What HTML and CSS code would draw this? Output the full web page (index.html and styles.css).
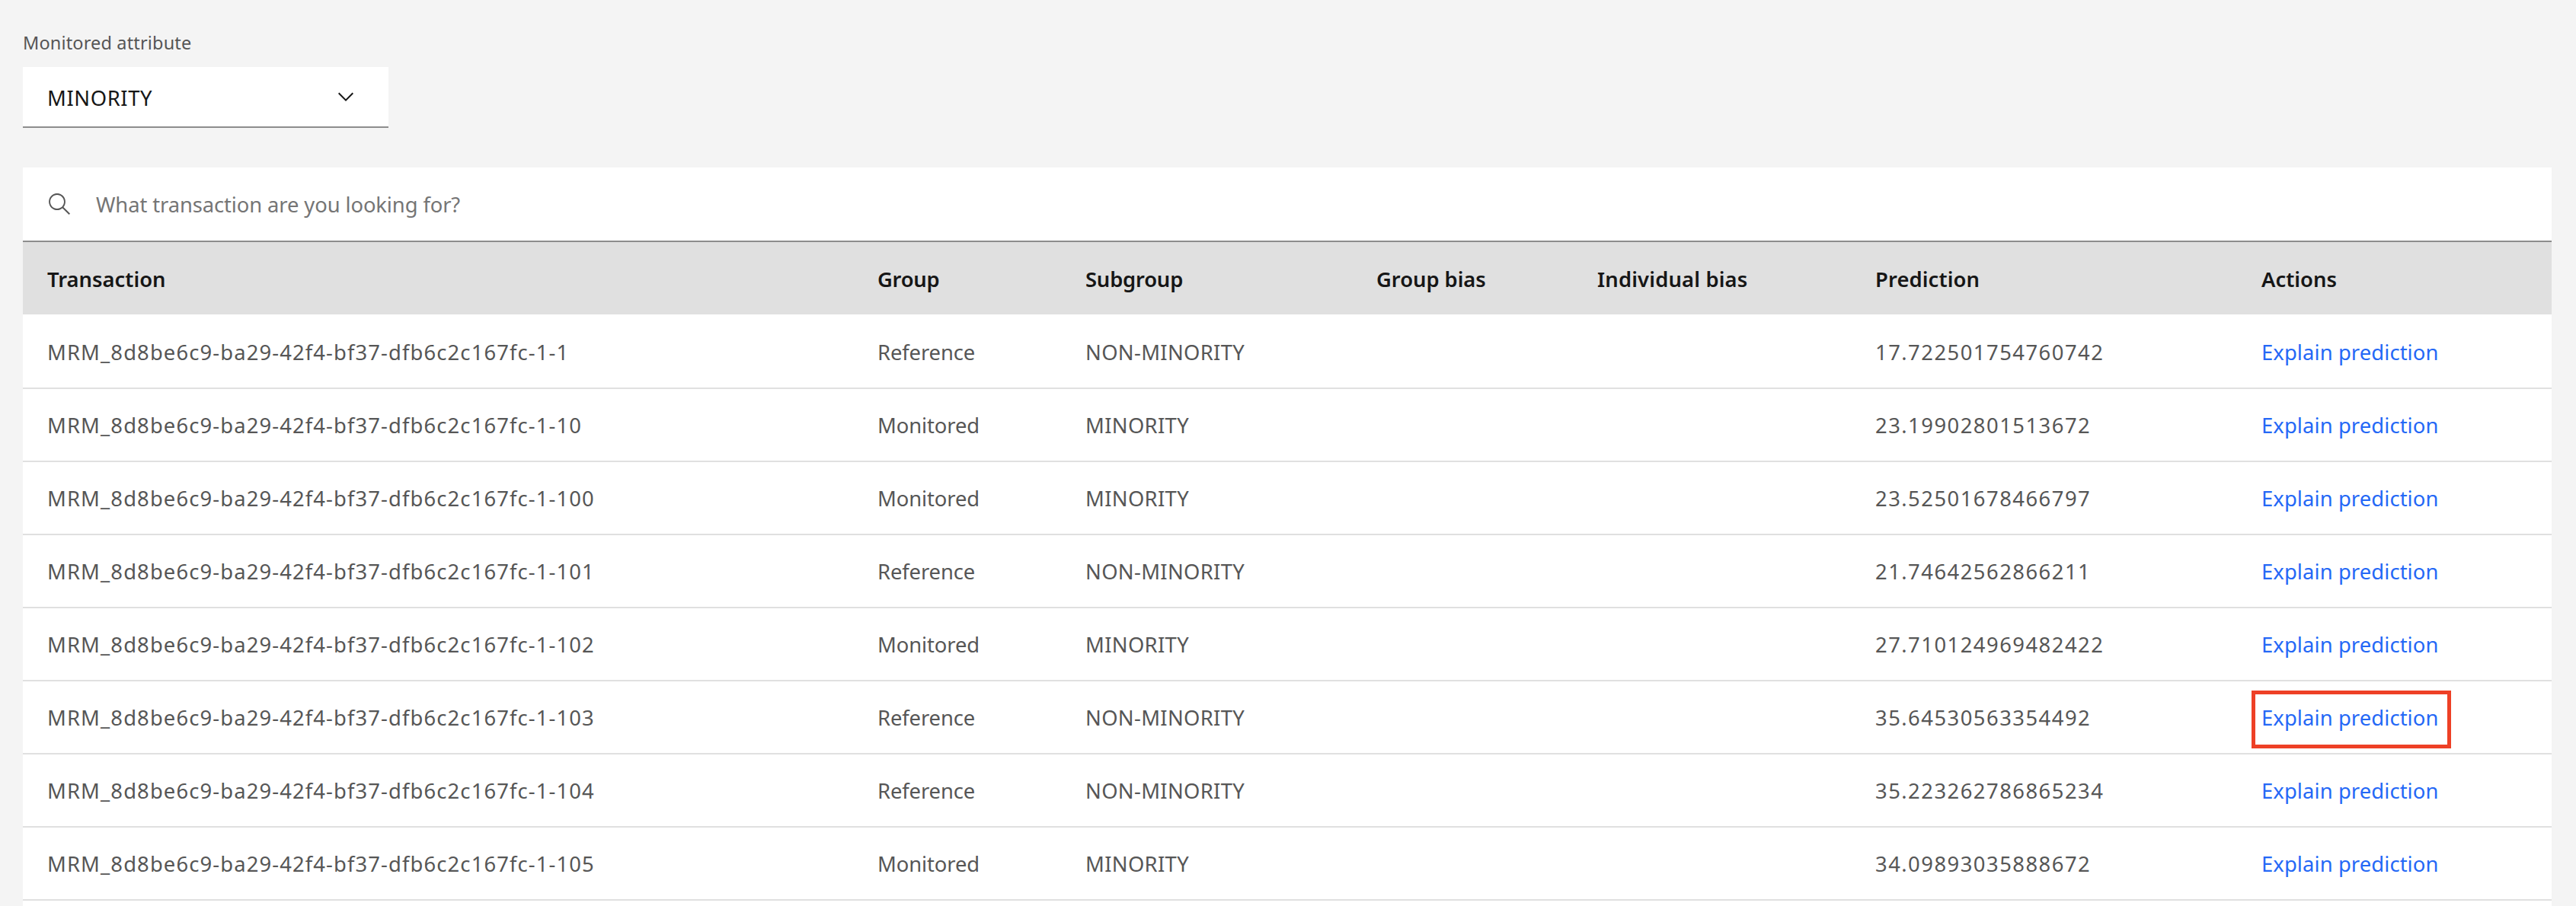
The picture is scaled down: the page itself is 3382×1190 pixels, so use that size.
FILE: index.html
```html
<!DOCTYPE html>
<html lang="en">
<head>
<meta charset="utf-8">
<title>Transactions</title>
<link rel="stylesheet" href="styles.css">
</head>
<body>
<main class="page">
  <section class="filter">
    <div class="filter-label">Monitored attribute</div>
    <div class="select">
      <span class="select-value">MINORITY</span>
      <svg class="icon" viewBox="0 0 16 16" fill="currentColor"><path d="M8 11L3 6l.7-.7L8 9.6l4.3-4.3.7.7z"/></svg>
    </div>
  </section>
  <section class="panel">
    <div class="search">
      <svg class="icon" viewBox="0 0 16 16" fill="currentColor"><path d="M15 14.3L10.7 10c1.9-2.3 1.6-5.8-.7-7.7S4.2.7 2.3 3 .7 8.8 3 10.7c2 1.7 5 1.7 7 0l4.3 4.3.7-.7zM2 6.5C2 4 4 2 6.5 2S11 4 11 6.5 9 11 6.5 11 2 9 2 6.5z"/></svg>
      <span class="search-placeholder">What transaction are you looking for?</span>
    </div>
    <table class="table">
      <colgroup>
        <col class="w-transaction"><col class="w-group"><col class="w-subgroup"><col class="w-group-bias"><col class="w-individual-bias"><col class="w-prediction"><col class="w-actions">
      </colgroup>
      <thead>
        <tr><th class="h-transaction">Transaction</th><th class="h-group">Group</th><th class="h-subgroup">Subgroup</th><th class="h-group-bias">Group bias</th><th class="h-individual-bias">Individual bias</th><th class="h-prediction">Prediction</th><th class="h-actions">Actions</th></tr>
      </thead>
      <tbody>
        <tr><td class="id">MRM_8d8be6c9-ba29-42f4-bf37-dfb6c2c167fc-1-1</td><td class="group">Reference</td><td class="subgroup">NON-MINORITY</td><td></td><td></td><td class="number">17.722501754760742</td><td><a class="link">Explain prediction</a></td></tr>
        <tr><td class="id">MRM_8d8be6c9-ba29-42f4-bf37-dfb6c2c167fc-1-10</td><td class="group">Monitored</td><td class="subgroup">MINORITY</td><td></td><td></td><td class="number">23.19902801513672</td><td><a class="link">Explain prediction</a></td></tr>
        <tr><td class="id">MRM_8d8be6c9-ba29-42f4-bf37-dfb6c2c167fc-1-100</td><td class="group">Monitored</td><td class="subgroup">MINORITY</td><td></td><td></td><td class="number">23.52501678466797</td><td><a class="link">Explain prediction</a></td></tr>
        <tr><td class="id">MRM_8d8be6c9-ba29-42f4-bf37-dfb6c2c167fc-1-101</td><td class="group">Reference</td><td class="subgroup">NON-MINORITY</td><td></td><td></td><td class="number">21.74642562866211</td><td><a class="link">Explain prediction</a></td></tr>
        <tr><td class="id">MRM_8d8be6c9-ba29-42f4-bf37-dfb6c2c167fc-1-102</td><td class="group">Monitored</td><td class="subgroup">MINORITY</td><td></td><td></td><td class="number">27.710124969482422</td><td><a class="link">Explain prediction</a></td></tr>
        <tr><td class="id">MRM_8d8be6c9-ba29-42f4-bf37-dfb6c2c167fc-1-103</td><td class="group">Reference</td><td class="subgroup">NON-MINORITY</td><td></td><td></td><td class="number">35.64530563354492</td><td><a class="link highlighted">Explain prediction</a></td></tr>
        <tr><td class="id">MRM_8d8be6c9-ba29-42f4-bf37-dfb6c2c167fc-1-104</td><td class="group">Reference</td><td class="subgroup">NON-MINORITY</td><td></td><td></td><td class="number">35.223262786865234</td><td><a class="link">Explain prediction</a></td></tr>
        <tr><td class="id">MRM_8d8be6c9-ba29-42f4-bf37-dfb6c2c167fc-1-105</td><td class="group">Monitored</td><td class="subgroup">MINORITY</td><td></td><td></td><td class="number">34.09893035888672</td><td><a class="link">Explain prediction</a></td></tr>
      </tbody>
    </table>
  </section>
</main>
</body>
</html>
```
FILE: styles.css
```css
*, *::after { box-sizing: border-box; }

body {
  margin: 0;
  background: #f4f4f4;
  color: #565656;
  font-family: "Noto Sans", "Open Sans", sans-serif;
  font-size: 27.4px;
  line-height: 36px;
}

.page {
  height: 1190px;
  padding: 40px 32px 0 30px;
  display: flex;
  flex-direction: column;
  overflow: hidden;
}

.icon { width: 32px; height: 32px; flex: none; }

/* Attribute filter */
.filter { width: 480px; margin-bottom: 52px; }

.filter-label {
  height: 48px;
  line-height: 32px;
  font-size: 23.5px;
  letter-spacing: .15px;
}

.select {
  height: 80px;
  padding: 0 40px 0 32px;
  display: flex;
  align-items: center;
  justify-content: space-between;
  background: #fff;
  border-bottom: 2px solid #8d8d8d;
  color: #161616;
}

.select-value { padding-top: 4px; letter-spacing: .6px; }

/* Search and table */
.panel { flex: 1; background: #fff; }

.search {
  height: 98px;
  padding-left: 32px;
  display: flex;
  align-items: center;
  gap: 32px;
  border-bottom: 2px solid #8d8d8d;
  color: #565656;
}

.search-placeholder { padding-top: 2px; color: #757575; letter-spacing: -.11px; }

.table {
  width: 3320px;
  table-layout: fixed;
  border-collapse: separate;
  border-spacing: 0;
}

.w-transaction { width: 1090px; }
.w-group { width: 273px; }
.w-subgroup { width: 382px; }
.w-group-bias { width: 290px; }
.w-individual-bias { width: 365px; }
.w-prediction { width: 507px; }
.w-actions { width: 413px; }

.table th, .table td {
  padding: 2px 0 0 32px;
  text-align: left;
  vertical-align: middle;
  white-space: nowrap;
}

.table th {
  height: 97px;
  background: #e0e0e0;
  border-bottom: 2px solid #fff;
  color: #161616;
  font-weight: 600;
}

.table td { height: 96px; border-bottom: 2px solid #e0e0e0; }

.h-transaction { letter-spacing: 0; }
.h-group { letter-spacing: -.3px; }
.h-subgroup { letter-spacing: -.2px; }
.h-group-bias { letter-spacing: -.05px; }
.h-individual-bias { letter-spacing: .15px; }
.h-prediction { letter-spacing: .1px; }
.h-actions { letter-spacing: 0; }

.id { letter-spacing: 1.12px; }
.group { letter-spacing: -.1px; }
.subgroup { letter-spacing: .32px; }
.number { letter-spacing: 1.48px; }

.link { position: relative; color: #2468f6; letter-spacing: .1px; }

.highlighted::after {
  content: "";
  position: absolute;
  left: -13.5px;
  top: -17px;
  width: 262px;
  height: 76px;
  border: 5px solid #ee4026;
}
```
